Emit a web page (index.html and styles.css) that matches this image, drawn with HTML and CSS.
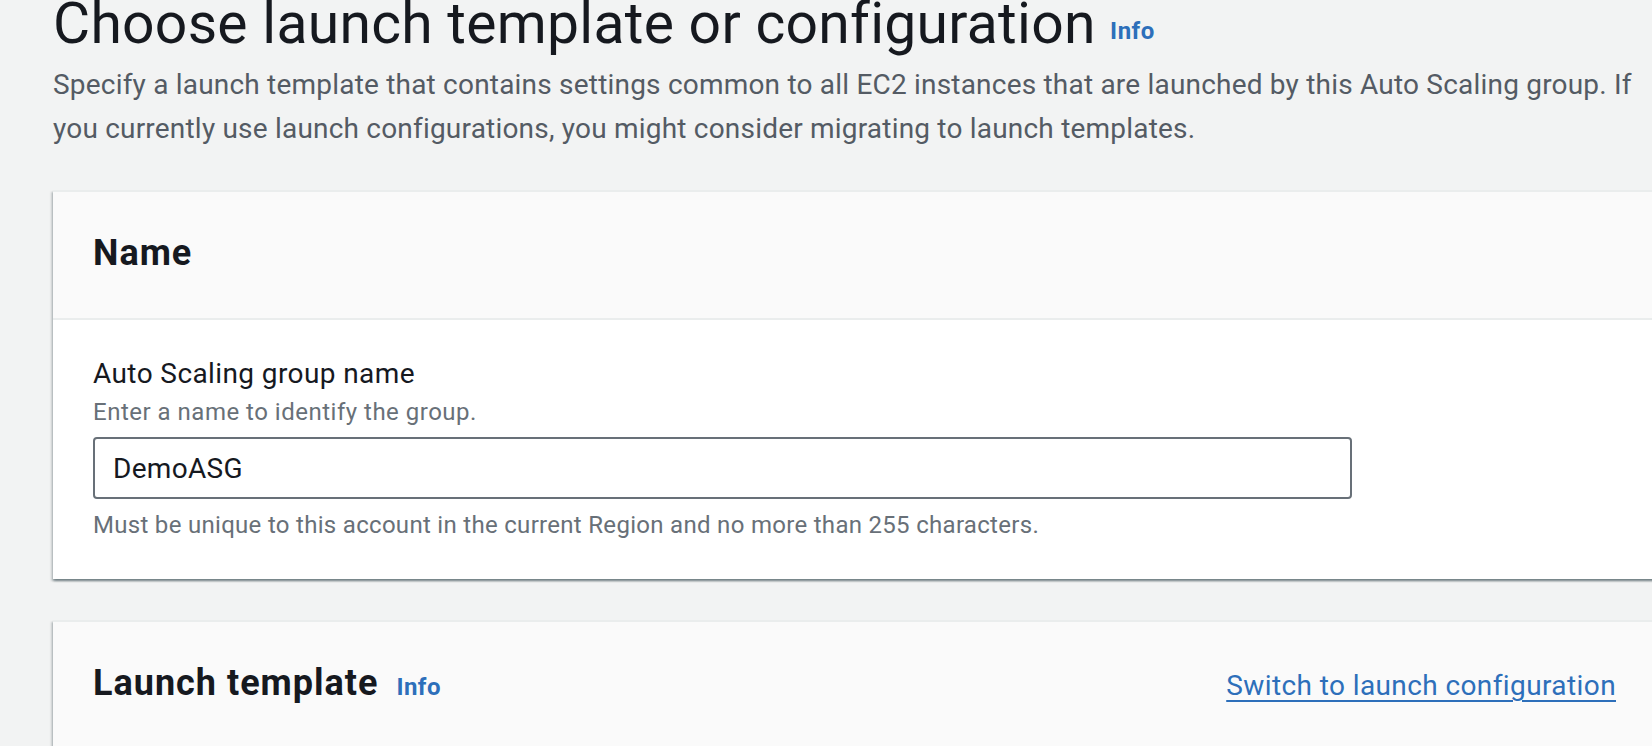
FILE: index.html
```html
<!DOCTYPE html>
<html lang="en">
<head>
<meta charset="utf-8">
<title>Choose launch template or configuration</title>
<link rel="stylesheet" href="styles.css">
</head>
<body>
<main class="page">
  <header class="page-header">
    <h1 class="page-title">Choose launch template or configuration <a class="info-link info-link-lg" href="#">Info</a></h1>
    <p class="page-desc">Specify a launch template that contains settings common to all EC2 instances that are launched by this Auto Scaling group. If<br>you currently use launch configurations, you might consider migrating to launch templates.</p>
  </header>

  <section class="container">
    <div class="container-header">
      <h2 class="container-title">Name</h2>
    </div>
    <div class="container-body">
      <div class="field">
        <label class="field-label" for="asg-name">Auto Scaling group name</label>
        <div class="field-desc">Enter a name to identify the group.</div>
        <input class="text-input" id="asg-name" type="text" value="DemoASG">
        <div class="field-constraint">Must be unique to this account in the current Region and no more than 255 characters.</div>
      </div>
    </div>
  </section>

  <section class="container container-open">
    <div class="container-header container-header-split">
      <h2 class="container-title">Launch template <a class="info-link" href="#">Info</a></h2>
      <a class="switch-link" href="#">Switch to launch configuration</a>
    </div>
  </section>
</main>
</body>
</html>
```

FILE: styles.css
```css
html, body {
  margin: 0;
  padding: 0;
}

body {
  background: #f2f3f3;
  font-family: Roboto, "Liberation Sans", sans-serif;
  color: #16191f;
  width: 1652px;
  height: 746px;
  overflow: hidden;
}

.page {
  padding-left: 53px;
  padding-top: 1px;
  margin-right: -4px;
}

.page-header {
  display: flex;
  flex-direction: column;
}

.page-title {
  margin: 0;
  font-size: 57px;
  line-height: 46px;
  font-weight: 400;
  letter-spacing: 0.28px;
  color: #16191f;
  white-space: nowrap;
}

.info-link {
  display: inline-block;
  font-size: 24px;
  font-weight: 700;
  letter-spacing: 0.5px;
  color: #2d6fba;
  text-decoration: none;
}

.info-link-lg {
  margin-left: 0;
  vertical-align: 4px;
}

.page-desc {
  margin: 9px 0 0;
  font-size: 28px;
  line-height: 44px;
  letter-spacing: 0.2px;
  color: #545b64;
  white-space: nowrap;
}

.container {
  margin-top: 39px;
  background: #ffffff;
  border-top: 2px solid #eaeded;
  box-shadow: 0 2px 2px 0 rgba(0, 28, 36, 0.35),
              2px 2px 2px 0 rgba(0, 28, 36, 0.15),
              -2px 2px 2px 0 rgba(0, 28, 36, 0.15);
}

.container + .container {
  margin-top: 41px;
}

.container-open {
  min-height: 200px;
  background: #fafafa;
}

.container-header {
  background: #fafafa;
  padding: 39px 40px 43px;
  border-bottom: 2px solid #eaeded;
}

.container-open .container-header {
  border-bottom: none;
}

.container-header-split {
  display: flex;
  align-items: baseline;
  justify-content: space-between;
}

.container-title {
  margin: 0;
  font-size: 36px;
  line-height: 44px;
  font-weight: 700;
  letter-spacing: 1px;
  color: #16191f;
}

.container-title .info-link {
  margin-left: 8px;
  letter-spacing: 0.5px;
}

.container-body {
  padding: 34px 40px 36px;
}

.field {
  display: flex;
  flex-direction: column;
}

.field-label {
  font-size: 28px;
  line-height: 40px;
  letter-spacing: 0.4px;
  color: #16191f;
}

.field-desc {
  font-size: 24px;
  line-height: 36px;
  letter-spacing: 0.5px;
  color: #687078;
}

.text-input {
  box-sizing: border-box;
  margin-top: 7px;
  width: 1259px;
  height: 62px;
  padding: 0 18px;
  border: 2px solid #687078;
  border-radius: 4px;
  background: #ffffff;
  font-family: Roboto, "Liberation Sans", sans-serif;
  font-size: 28px;
  letter-spacing: 0.3px;
  color: #16191f;
  outline: none;
}

.field-constraint {
  margin-top: 8px;
  font-size: 24px;
  line-height: 36px;
  letter-spacing: 0.3px;
  color: #687078;
}

.switch-link {
  font-size: 28px;
  line-height: 44px;
  letter-spacing: 0.4px;
  color: #2d6fba;
  text-decoration: underline;
  text-decoration-thickness: 2px;
  text-underline-offset: 5px;
}
```
